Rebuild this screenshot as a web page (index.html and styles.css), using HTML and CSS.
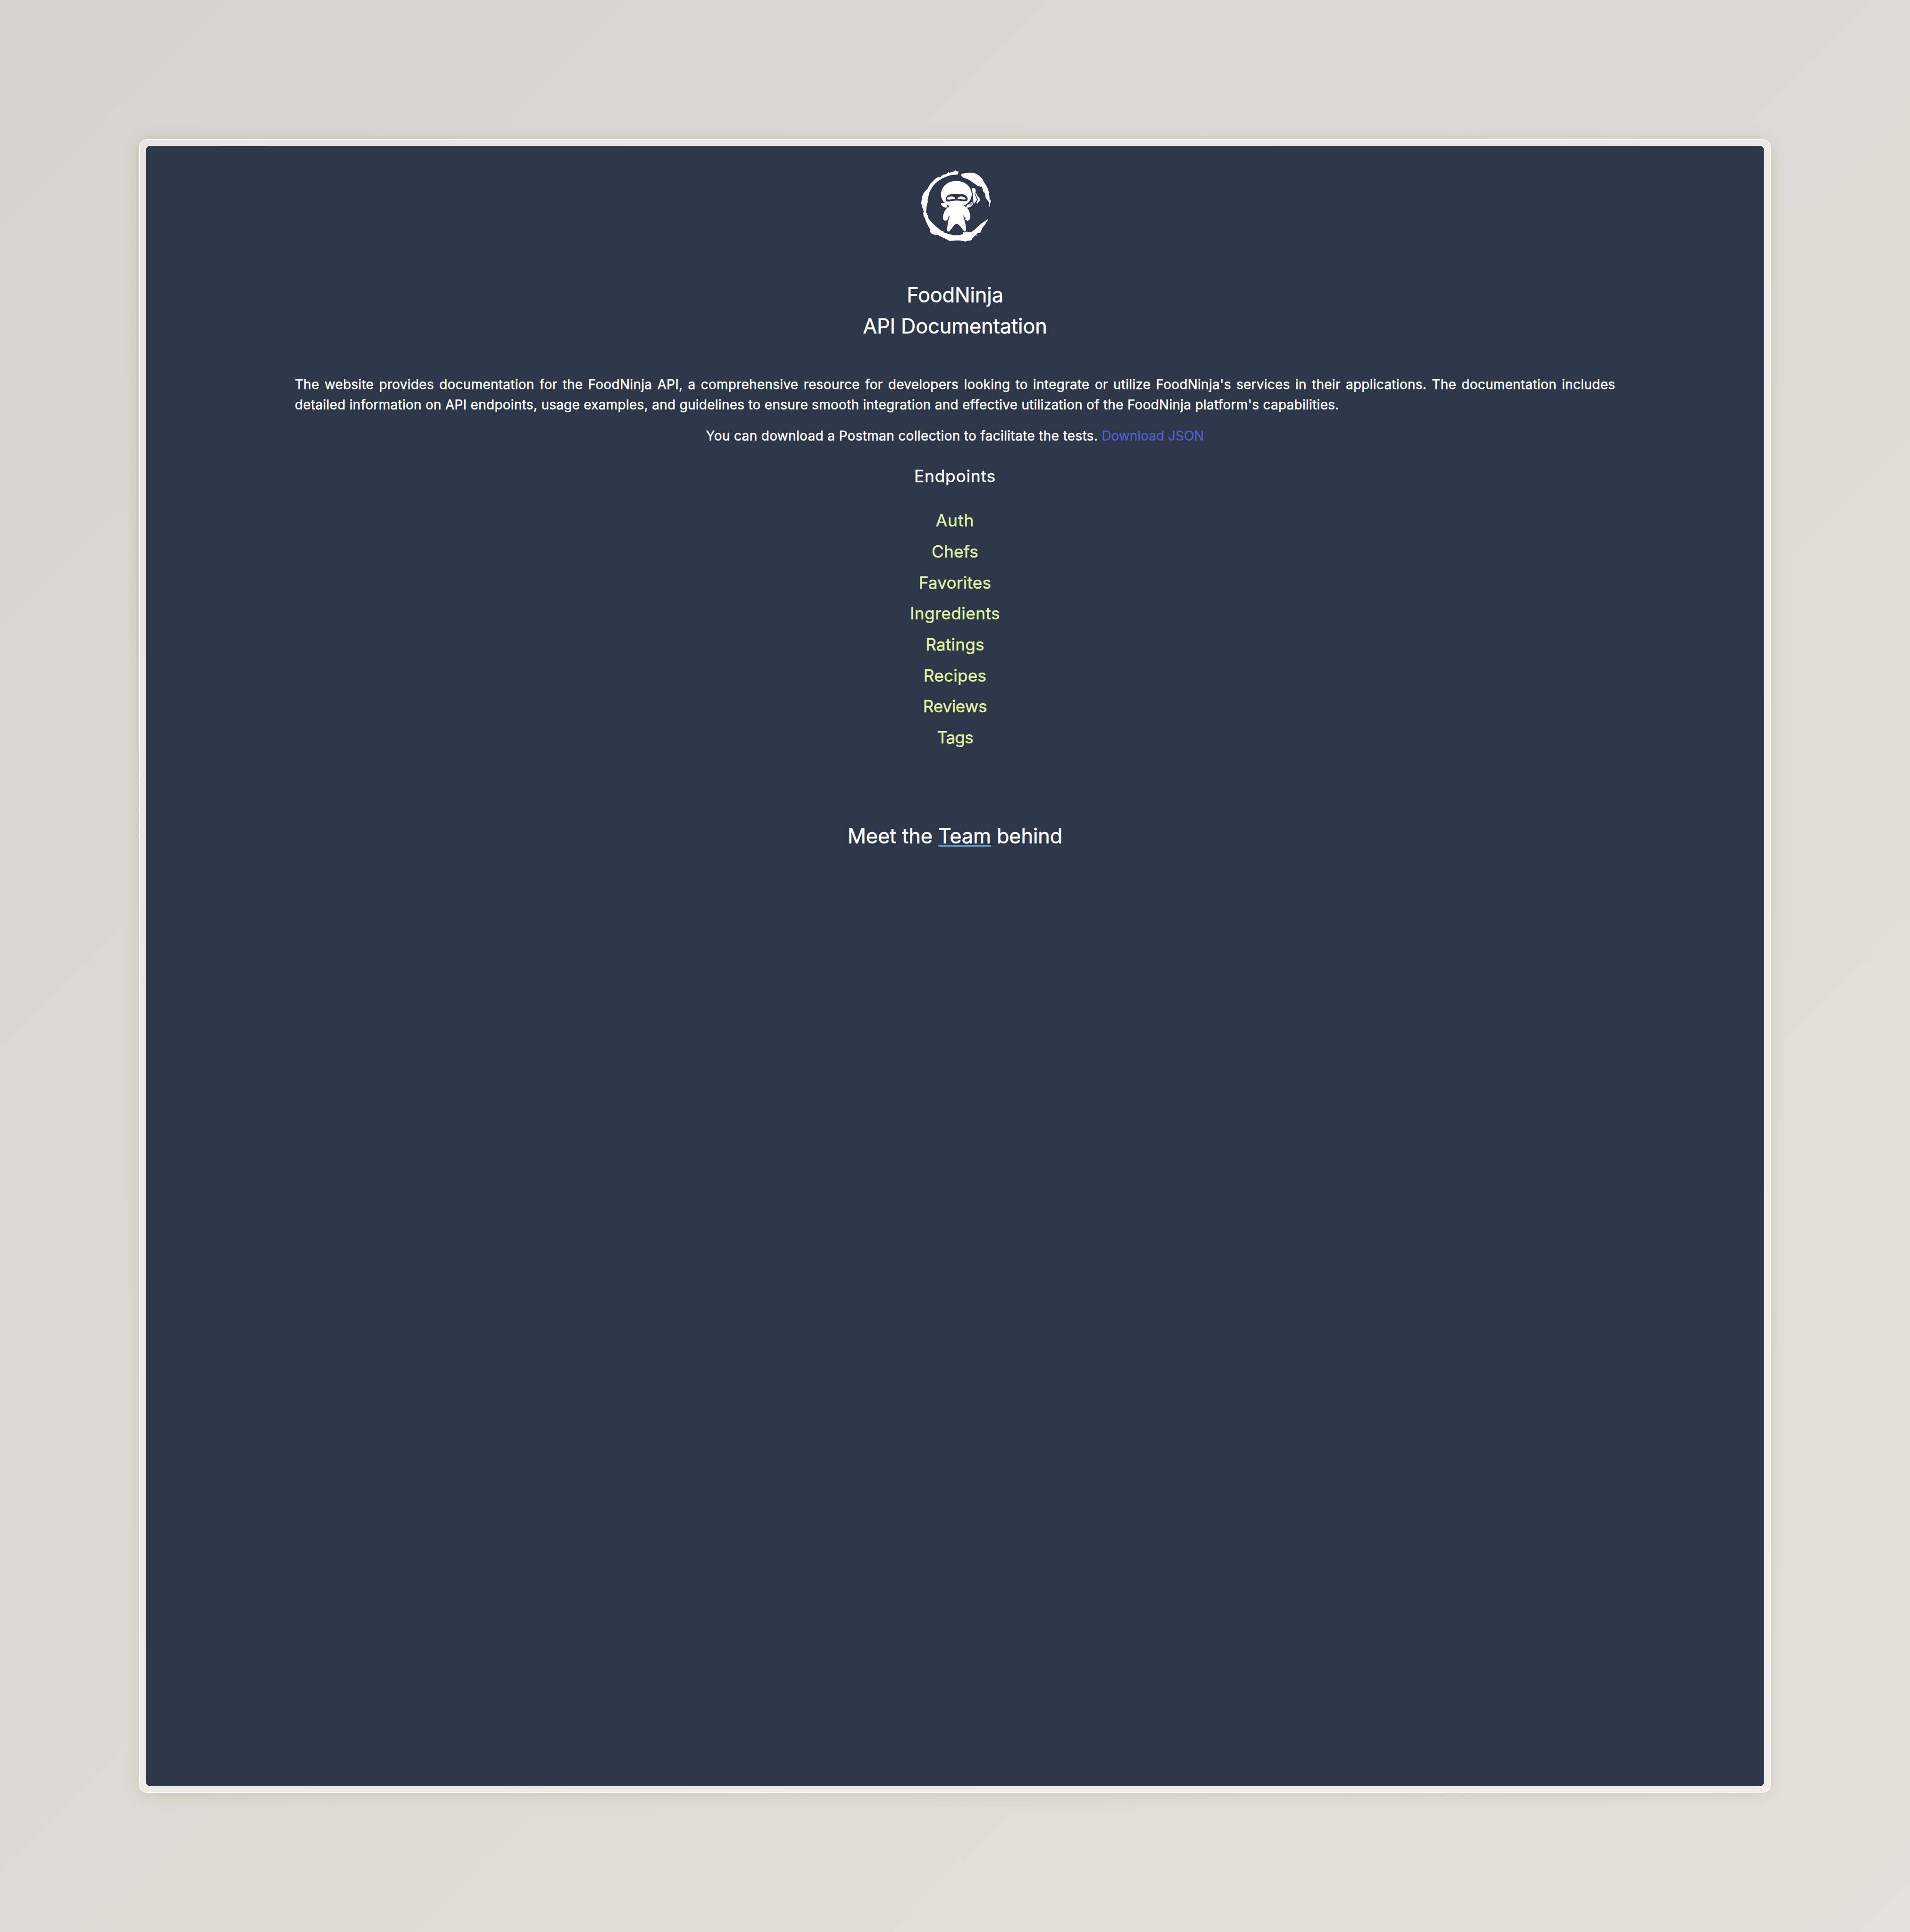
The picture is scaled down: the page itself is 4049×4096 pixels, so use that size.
FILE: index.html
```html
<!DOCTYPE html>
<html lang="en">
<head>
<meta charset="utf-8">
<title>FoodNinja API Documentation</title>
<link rel="stylesheet" href="styles.css">
</head>
<body>
<div class="frame">
  <main class="screen">
    <svg class="logo" viewBox="0 0 720 720" role="img" aria-label="FoodNinja">
      <g fill="#fff">
        <!-- brush ring -->
        <path d="M372 92 L370 112 L362 117 C330 116 300 122 268 136 C232 151 200 172 178 198 C152 230 137 262 135 292 L128 316 L130 332 L121 362 L118 395 L117 418 L124 421 L122 430 L131 438 L134 458 L141 470 C160 495 190 524 236 560 L246 565 L252 559 L254 571 C290 586 330 596 362 596 C380 595 398 590 408 585 L406 572 L412 570 L418 577 L420 570 L430 567 L433 572 L440 566 L448 573 L456 568 L462 573 L476 568 C500 552 528 526 548 507 C568 492 588 478 607 468 C604 480 590 500 580 513 L562 536 C556 550 552 562 546 574 L522 580 L513 592 L519 605 L510 596 L504 598 L482 620 L478 634 L465 636 L464 648 L458 636 L430 642 L426 650 L418 642 C408 641 398 640 388 637 C360 634 330 638 300 640 L272 624 L240 608 C220 600 205 592 190 592 C172 591 160 585 151 575 L145 545 L128 512 L112 478 L108 462 L97 445 L93 418 L99 414 L86 375 C84 360 81 352 78 344 L82 308 C86 286 92 270 102 255 L124 232 C140 210 142 200 152 186 L180 158 C194 144 202 138 212 137 L230 138 L238 125 L256 116 L274 114 L292 96 L298 102 L322 97 L342 88 L350 82 L356 88 Z"/>
        <path d="M394 122 C394 112 400 107 410 107 L422 105 C440 101 470 100 494 103 C520 110 545 130 562 150 L572 172 C580 188 588 196 594 206 C604 226 612 246 612 262 C616 278 618 296 618 311 L621 324 L630 311 L626 335 L622 344 L621 370 L616 370 L615 338 L600 318 C594 310 588 302 584 290 L583 270 C580 258 570 254 565 246 L562 226 L556 210 C546 214 534 209 520 202 L482 176 C462 162 446 150 430 146 C416 142 400 138 394 122 Z"/>
        <!-- body -->
        <path d="M355 166 C420 166 476 210 477 272 C477 304 460 334 432 352 L410 362 C432 366 446 382 454 400 C462 420 466 440 465 456 C465 472 454 481 442 481 L427 474 L425 466 L429 460 L425 452 L418 450 L418 443 L409 437 C418 470 428 500 432 540 C434 560 428 567 420 565 C408 558 396 530 376 514 C364 504 352 504 342 512 C328 526 314 552 300 564 C290 569 282 564 283 550 C285 515 292 470 304 438 L292 450 L291 466 L284 474 C272 484 254 482 250 466 C248 430 262 396 286 378 L301 364 L280 352 C250 334 234 306 234 272 C235 210 290 166 355 166 Z"/>
        <!-- spoon, fork and bandana tails -->
        <path d="M234 347 C236 338 250 337 262 341 C278 345 286 356 283 368 L292 374 L284 379 L276 375 C262 380 238 366 234 347 Z"/>
        <path d="M478 226 C486 219 500 222 506 232 C511 242 508 258 502 266 L490 270 L484 264 L478 250 Z"/>
        <path d="M486 272 L500 270 L518 314 L498 345 L491 344 Z"/>
        <path d="M503 264 L512 262 L520 280 L546 314 L522 347 L514 336 L526 314 Z"/>
        <path d="M432 374 L440 354 L452 352 L474 334 L488 340 L488 353 L462 373 L438 379 Z"/>
      </g>
      <g fill="#2e3649">
        <path d="M271 315 C273 292 284 278 304 274 C335 267 385 267 416 274 C434 279 446 296 445 312 C443 326 430 330 412 327 C375 320 338 320 304 328 C284 331 270 328 271 315 Z"/>
        <circle cx="115" cy="448" r="2"/><circle cx="124" cy="460" r="2"/>
      </g>
      <g fill="#fff">
        <path d="M281 308 C282 295 298 289 315 289 C332 289 345 296 347 307 C338 312 326 310 314 311 C302 313 286 316 281 308 Z"/>
        <path d="M364 306 C367 295 380 289 396 289 C414 290 427 298 430 309 C420 315 408 312 396 310 C384 309 372 312 364 306 Z"/>
      </g>
      <g fill="none" stroke="#2e3649">
        <path stroke-width="2" d="M454 352 L470 340 M458 357 L480 341 M463 361 L483 346 M454 352 L464 363 M460 347 L469 358 M466 343 L475 353 M472 339 L480 348"/>
        <path stroke-width="3" d="M477 228 L482 266 M284 378 L296 372"/>
      </g>
    </svg>

    <h1 class="title">FoodNinja<br>API Documentation</h1>

    <p class="intro">The website provides documentation for the FoodNinja API, a comprehensive resource for developers looking to integrate or utilize FoodNinja's services in their applications. The documentation includes detailed information on API endpoints, usage examples, and guidelines to ensure smooth integration and effective utilization of the FoodNinja platform's capabilities.</p>

    <p class="download"><span class="download-text">You can download a Postman collection to facilitate the tests.</span> <a class="download-link" href="#">Download JSON</a></p>

    <h2 class="subtitle">Endpoints</h2>
    <ul class="endpoints">
      <li class="loose">Auth</li>
      <li>Chefs</li>
      <li>Favorites</li>
      <li class="wide">Ingredients</li>
      <li>Ratings</li>
      <li>Recipes</li>
      <li class="tight">Reviews</li>
      <li class="tighter">Tags</li>
    </ul>

    <p class="team">Meet the <a class="team-link" href="#">Team</a> behind</p>
  </main>
</div>
</body>
</html>
```
FILE: styles.css
```css
* { box-sizing: border-box; }

body {
  margin: 0;
  height: 4096px;
  padding: 295.4px;
  background: linear-gradient(135deg, #d8d3cc 0%, #dfdad3 50%, #e7e0da 100%);
  font-family: Inter, "Open Sans", sans-serif;
  color: #fff;
  -webkit-text-stroke: .5px currentColor;
}

.frame {
  height: 100%;
  padding: 11.7px;
  border: 2px solid #f9f6f3;
  border-radius: 17px;
  background: linear-gradient(135deg, #e9e5e2, #f1edea);
  box-shadow: 0 4px 34px rgba(60, 50, 40, .1);
}

.screen {
  display: flex;
  flex-direction: column;
  align-items: center;
  height: 100%;
  padding: 29.8px 316px 0;
  border-radius: 10px;
  background: #2e3649;
}

.logo {
  width: 193.2px;
  height: 193.2px;
  margin-left: 8px;
}

.title,
.team {
  font-size: 43.3px;
  font-weight: 400;
  line-height: 66px;
  letter-spacing: -.12px;
  text-align: center;
}

.title { margin: 60.4px 0 0; }

.intro,
.download {
  font-size: 27.9px;
  line-height: 43.6px;
  letter-spacing: .315px;
}

.intro {
  width: 2799px;
  margin: 69.3px 0 0;
  text-align: justify;
}

.download { margin: 22.3px 0 0; }
.download-text { letter-spacing: .39px; }

.download-link {
  color: #5062cf;
  letter-spacing: .05px;
  text-decoration: none;
  -webkit-text-stroke-width: .3px;
}

.subtitle {
  margin: 34.7px 0 0;
  font-size: 35.2px;
  font-weight: 400;
  line-height: 54px;
  letter-spacing: .85px;
}

.endpoints {
  margin: 35.6px 0 0;
  padding: 0;
  list-style: none;
  font-size: 35.2px;
  line-height: 65.7px;
  letter-spacing: .2px;
  text-align: center;
  color: #e0f2a3;
}

.endpoints .loose { letter-spacing: 1px; }
.endpoints .wide { letter-spacing: .45px; }
.endpoints .tight { letter-spacing: -.3px; }
.endpoints .tighter { letter-spacing: -1px; }

.team { margin: 142.1px 0 0; }

.team-link {
  color: inherit;
  text-decoration: underline;
  text-decoration-color: #6597cf;
  text-decoration-thickness: 4.3px;
  text-decoration-skip-ink: none;
  text-underline-offset: 3.2px;
}
```
